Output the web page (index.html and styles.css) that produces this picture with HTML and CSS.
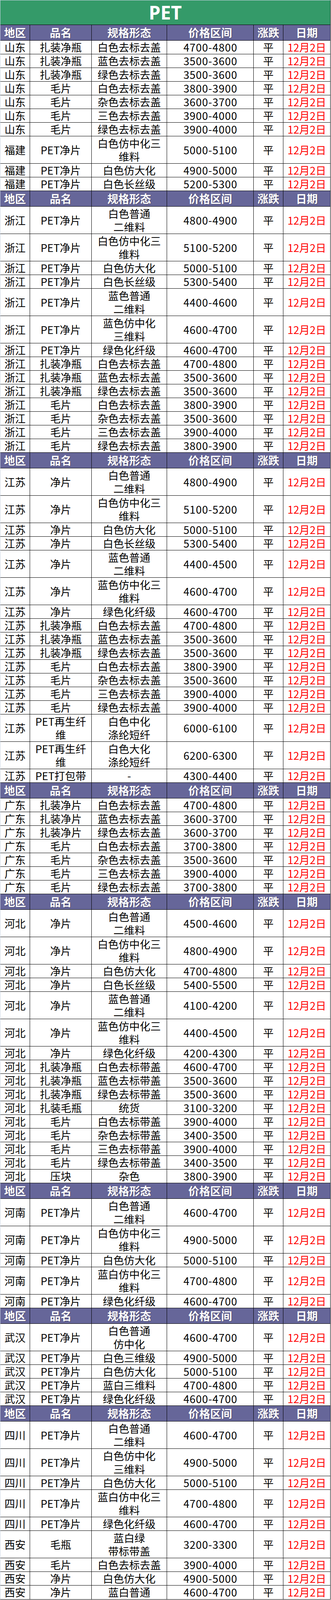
FILE: index.html
```html
<!DOCTYPE html>
<html lang="zh-CN">
<head>
<meta charset="utf-8">
<title>PET</title>
<link rel="stylesheet" href="styles.css">
</head>
<body>
<div class="sheet">
  <div class="title">PET</div>

  <div class="row head"><div class="c">地区</div><div class="c">品名</div><div class="c">规格形态</div><div class="c">价格区间</div><div class="c">涨跌</div><div class="c">日期</div></div>
  <div class="row"><div class="c">山东</div><div class="c">扎装净瓶</div><div class="c">白色去标去盖</div><div class="c num">4700-4800</div><div class="c">平</div><div class="c date">12月2日</div></div>
  <div class="row"><div class="c">山东</div><div class="c">扎装净瓶</div><div class="c">蓝色去标去盖</div><div class="c num">3500-3600</div><div class="c">平</div><div class="c date">12月2日</div></div>
  <div class="row"><div class="c">山东</div><div class="c">扎装净瓶</div><div class="c">绿色去标去盖</div><div class="c num">3500-3600</div><div class="c">平</div><div class="c date">12月2日</div></div>
  <div class="row"><div class="c">山东</div><div class="c">毛片</div><div class="c">白色去标去盖</div><div class="c num">3800-3900</div><div class="c">平</div><div class="c date">12月2日</div></div>
  <div class="row"><div class="c">山东</div><div class="c">毛片</div><div class="c">杂色去标去盖</div><div class="c num">3600-3700</div><div class="c">平</div><div class="c date">12月2日</div></div>
  <div class="row"><div class="c">山东</div><div class="c">毛片</div><div class="c">三色去标去盖</div><div class="c num">3900-4000</div><div class="c">平</div><div class="c date">12月2日</div></div>
  <div class="row"><div class="c">山东</div><div class="c">毛片</div><div class="c">绿色去标去盖</div><div class="c num">3900-4000</div><div class="c">平</div><div class="c date">12月2日</div></div>
  <div class="row tall"><div class="c">福建</div><div class="c">PET净片</div><div class="c two">白色仿中化三<br>维料</div><div class="c num">5000-5100</div><div class="c">平</div><div class="c date">12月2日</div></div>
  <div class="row"><div class="c">福建</div><div class="c">PET净片</div><div class="c">白色仿大化</div><div class="c num">4900-5000</div><div class="c">平</div><div class="c date">12月2日</div></div>
  <div class="row"><div class="c">福建</div><div class="c">PET净片</div><div class="c">白色长丝级</div><div class="c num">5200-5300</div><div class="c">平</div><div class="c date">12月2日</div></div>

  <div class="row head"><div class="c">地区</div><div class="c">品名</div><div class="c">规格形态</div><div class="c">价格区间</div><div class="c">涨跌</div><div class="c">日期</div></div>
  <div class="row tall"><div class="c">浙江</div><div class="c">PET净片</div><div class="c two">白色普通<br>二维料</div><div class="c num">4800-4900</div><div class="c">平</div><div class="c date">12月2日</div></div>
  <div class="row tall"><div class="c">浙江</div><div class="c">PET净片</div><div class="c two">白色仿中化三<br>维料</div><div class="c num">5100-5200</div><div class="c">平</div><div class="c date">12月2日</div></div>
  <div class="row"><div class="c">浙江</div><div class="c">PET净片</div><div class="c">白色仿大化</div><div class="c num">5000-5100</div><div class="c">平</div><div class="c date">12月2日</div></div>
  <div class="row"><div class="c">浙江</div><div class="c">PET净片</div><div class="c">白色长丝级</div><div class="c num">5300-5400</div><div class="c">平</div><div class="c date">12月2日</div></div>
  <div class="row tall"><div class="c">浙江</div><div class="c">PET净片</div><div class="c two">蓝色普通<br>二维料</div><div class="c num">4400-4600</div><div class="c">平</div><div class="c date">12月2日</div></div>
  <div class="row tall"><div class="c">浙江</div><div class="c">PET净片</div><div class="c two">蓝色仿中化<br>三维料</div><div class="c num">4600-4700</div><div class="c">平</div><div class="c date">12月2日</div></div>
  <div class="row"><div class="c">浙江</div><div class="c">PET净片</div><div class="c">绿色化纤级</div><div class="c num">4600-4700</div><div class="c">平</div><div class="c date">12月2日</div></div>
  <div class="row"><div class="c">浙江</div><div class="c">扎装净瓶</div><div class="c">白色去标去盖</div><div class="c num">4700-4800</div><div class="c">平</div><div class="c date">12月2日</div></div>
  <div class="row"><div class="c">浙江</div><div class="c">扎装净瓶</div><div class="c">蓝色去标去盖</div><div class="c num">3500-3600</div><div class="c">平</div><div class="c date">12月2日</div></div>
  <div class="row"><div class="c">浙江</div><div class="c">扎装净瓶</div><div class="c">绿色去标去盖</div><div class="c num">3500-3600</div><div class="c">平</div><div class="c date">12月2日</div></div>
  <div class="row"><div class="c">浙江</div><div class="c">毛片</div><div class="c">白色去标去盖</div><div class="c num">3800-3900</div><div class="c">平</div><div class="c date">12月2日</div></div>
  <div class="row"><div class="c">浙江</div><div class="c">毛片</div><div class="c">杂色去标去盖</div><div class="c num">3500-3600</div><div class="c">平</div><div class="c date">12月2日</div></div>
  <div class="row"><div class="c">浙江</div><div class="c">毛片</div><div class="c">三色去标去盖</div><div class="c num">3900-4000</div><div class="c">平</div><div class="c date">12月2日</div></div>
  <div class="row"><div class="c">浙江</div><div class="c">毛片</div><div class="c">绿色去标去盖</div><div class="c num">3800-3900</div><div class="c">平</div><div class="c date">12月2日</div></div>

  <div class="row head"><div class="c">地区</div><div class="c">品名</div><div class="c">规格形态</div><div class="c">价格区间</div><div class="c">涨跌</div><div class="c">日期</div></div>
  <div class="row tall"><div class="c">江苏</div><div class="c">净片</div><div class="c two">白色普通<br>二维料</div><div class="c num">4800-4900</div><div class="c">平</div><div class="c date">12月2日</div></div>
  <div class="row tall"><div class="c">江苏</div><div class="c">净片</div><div class="c two">白色仿中化三<br>维料</div><div class="c num">5100-5200</div><div class="c">平</div><div class="c date">12月2日</div></div>
  <div class="row"><div class="c">江苏</div><div class="c">净片</div><div class="c">白色仿大化</div><div class="c num">5000-5100</div><div class="c">平</div><div class="c date">12月2日</div></div>
  <div class="row"><div class="c">江苏</div><div class="c">净片</div><div class="c">白色长丝级</div><div class="c num">5300-5400</div><div class="c">平</div><div class="c date">12月2日</div></div>
  <div class="row tall"><div class="c">江苏</div><div class="c">净片</div><div class="c two">蓝色普通<br>二维料</div><div class="c num">4400-4500</div><div class="c">平</div><div class="c date">12月2日</div></div>
  <div class="row tall"><div class="c">江苏</div><div class="c">净片</div><div class="c two">蓝色仿中化三<br>维料</div><div class="c num">4600-4700</div><div class="c">平</div><div class="c date">12月2日</div></div>
  <div class="row"><div class="c">江苏</div><div class="c">净片</div><div class="c">绿色化纤级</div><div class="c num">4600-4700</div><div class="c">平</div><div class="c date">12月2日</div></div>
  <div class="row"><div class="c">江苏</div><div class="c">扎装净瓶</div><div class="c">白色去标去盖</div><div class="c num">4700-4800</div><div class="c">平</div><div class="c date">12月2日</div></div>
  <div class="row"><div class="c">江苏</div><div class="c">扎装净瓶</div><div class="c">蓝色去标去盖</div><div class="c num">3500-3600</div><div class="c">平</div><div class="c date">12月2日</div></div>
  <div class="row"><div class="c">江苏</div><div class="c">扎装净瓶</div><div class="c">绿色去标去盖</div><div class="c num">3500-3600</div><div class="c">平</div><div class="c date">12月2日</div></div>
  <div class="row"><div class="c">江苏</div><div class="c">毛片</div><div class="c">白色去标去盖</div><div class="c num">3800-3900</div><div class="c">平</div><div class="c date">12月2日</div></div>
  <div class="row"><div class="c">江苏</div><div class="c">毛片</div><div class="c">杂色去标去盖</div><div class="c num">3500-3600</div><div class="c">平</div><div class="c date">12月2日</div></div>
  <div class="row"><div class="c">江苏</div><div class="c">毛片</div><div class="c">三色去标去盖</div><div class="c num">3900-4000</div><div class="c">平</div><div class="c date">12月2日</div></div>
  <div class="row"><div class="c">江苏</div><div class="c">毛片</div><div class="c">绿色去标去盖</div><div class="c num">3900-4000</div><div class="c">平</div><div class="c date">12月2日</div></div>
  <div class="row tall"><div class="c">江苏</div><div class="c two">PET再生纤<br>维</div><div class="c two">白色中化<br>涤纶短纤</div><div class="c num">6000-6100</div><div class="c">平</div><div class="c date">12月2日</div></div>
  <div class="row tall"><div class="c">江苏</div><div class="c two">PET再生纤<br>维</div><div class="c two">白色大化<br>涤纶短纤</div><div class="c num">6200-6300</div><div class="c">平</div><div class="c date">12月2日</div></div>
  <div class="row"><div class="c">江苏</div><div class="c">PET打包带</div><div class="c">-</div><div class="c num">4300-4400</div><div class="c">平</div><div class="c date">12月2日</div></div>

  <div class="row head"><div class="c">地区</div><div class="c">品名</div><div class="c">规格形态</div><div class="c">价格区间</div><div class="c">涨跌</div><div class="c">日期</div></div>
  <div class="row"><div class="c">广东</div><div class="c">扎装净片</div><div class="c">白色去标去盖</div><div class="c num">4700-4800</div><div class="c">平</div><div class="c date">12月2日</div></div>
  <div class="row"><div class="c">广东</div><div class="c">扎装净片</div><div class="c">蓝色去标去盖</div><div class="c num">3600-3700</div><div class="c">平</div><div class="c date">12月2日</div></div>
  <div class="row"><div class="c">广东</div><div class="c">扎装净片</div><div class="c">绿色去标去盖</div><div class="c num">3600-3700</div><div class="c">平</div><div class="c date">12月2日</div></div>
  <div class="row"><div class="c">广东</div><div class="c">毛片</div><div class="c">白色去标去盖</div><div class="c num">3700-3800</div><div class="c">平</div><div class="c date">12月2日</div></div>
  <div class="row"><div class="c">广东</div><div class="c">毛片</div><div class="c">杂色去标去盖</div><div class="c num">3500-3600</div><div class="c">平</div><div class="c date">12月2日</div></div>
  <div class="row"><div class="c">广东</div><div class="c">毛片</div><div class="c">三色去标去盖</div><div class="c num">3900-4000</div><div class="c">平</div><div class="c date">12月2日</div></div>
  <div class="row"><div class="c">广东</div><div class="c">毛片</div><div class="c">绿色去标去盖</div><div class="c num">3700-3800</div><div class="c">平</div><div class="c date">12月2日</div></div>

  <div class="row head"><div class="c">地区</div><div class="c">品名</div><div class="c">规格形态</div><div class="c">价格区间</div><div class="c">涨跌</div><div class="c">日期</div></div>
  <div class="row tall"><div class="c">河北</div><div class="c">净片</div><div class="c two">白色普通<br>二维料</div><div class="c num">4500-4600</div><div class="c">平</div><div class="c date">12月2日</div></div>
  <div class="row tall"><div class="c">河北</div><div class="c">净片</div><div class="c two">白色仿中化三<br>维料</div><div class="c num">4800-4900</div><div class="c">平</div><div class="c date">12月2日</div></div>
  <div class="row"><div class="c">河北</div><div class="c">净片</div><div class="c">白色仿大化</div><div class="c num">4700-4800</div><div class="c">平</div><div class="c date">12月2日</div></div>
  <div class="row"><div class="c">河北</div><div class="c">净片</div><div class="c">白色长丝级</div><div class="c num">5400-5500</div><div class="c">平</div><div class="c date">12月2日</div></div>
  <div class="row tall"><div class="c">河北</div><div class="c">净片</div><div class="c two">蓝色普通<br>二维料</div><div class="c num">4100-4200</div><div class="c">平</div><div class="c date">12月2日</div></div>
  <div class="row tall"><div class="c">河北</div><div class="c">净片</div><div class="c two">蓝色仿中化三<br>维料</div><div class="c num">4400-4500</div><div class="c">平</div><div class="c date">12月2日</div></div>
  <div class="row"><div class="c">河北</div><div class="c">净片</div><div class="c">绿色化纤级</div><div class="c num">4200-4300</div><div class="c">平</div><div class="c date">12月2日</div></div>
  <div class="row"><div class="c">河北</div><div class="c">扎装净瓶</div><div class="c">白色去标带盖</div><div class="c num">4600-4700</div><div class="c">平</div><div class="c date">12月2日</div></div>
  <div class="row"><div class="c">河北</div><div class="c">扎装净瓶</div><div class="c">蓝色去标带盖</div><div class="c num">3500-3600</div><div class="c">平</div><div class="c date">12月2日</div></div>
  <div class="row"><div class="c">河北</div><div class="c">扎装净瓶</div><div class="c">绿色去标带盖</div><div class="c num">3500-3600</div><div class="c">平</div><div class="c date">12月2日</div></div>
  <div class="row"><div class="c">河北</div><div class="c">扎装毛瓶</div><div class="c">统货</div><div class="c num">3100-3200</div><div class="c">平</div><div class="c date">12月2日</div></div>
  <div class="row"><div class="c">河北</div><div class="c">毛片</div><div class="c">白色去标带盖</div><div class="c num">3900-4000</div><div class="c">平</div><div class="c date">12月2日</div></div>
  <div class="row"><div class="c">河北</div><div class="c">毛片</div><div class="c">杂色去标带盖</div><div class="c num">3400-3500</div><div class="c">平</div><div class="c date">12月2日</div></div>
  <div class="row"><div class="c">河北</div><div class="c">毛片</div><div class="c">三色去标带盖</div><div class="c num">3900-4000</div><div class="c">平</div><div class="c date">12月2日</div></div>
  <div class="row"><div class="c">河北</div><div class="c">毛片</div><div class="c">绿色去标带盖</div><div class="c num">3400-3500</div><div class="c">平</div><div class="c date">12月2日</div></div>
  <div class="row"><div class="c">河北</div><div class="c">压块</div><div class="c">杂色</div><div class="c num">3800-3900</div><div class="c">平</div><div class="c date">12月2日</div></div>

  <div class="row head"><div class="c">地区</div><div class="c">品名</div><div class="c">规格形态</div><div class="c">价格区间</div><div class="c">涨跌</div><div class="c">日期</div></div>
  <div class="row tall"><div class="c">河南</div><div class="c">PET净片</div><div class="c two">白色普通<br>二维料</div><div class="c num">4600-4700</div><div class="c">平</div><div class="c date">12月2日</div></div>
  <div class="row tall"><div class="c">河南</div><div class="c">PET净片</div><div class="c two">白色仿中化三<br>维料</div><div class="c num">4900-5000</div><div class="c">平</div><div class="c date">12月2日</div></div>
  <div class="row"><div class="c">河南</div><div class="c">PET净片</div><div class="c">白色仿大化</div><div class="c num">5000-5100</div><div class="c">平</div><div class="c date">12月2日</div></div>
  <div class="row tall"><div class="c">河南</div><div class="c">PET净片</div><div class="c two">蓝白仿中化三<br>维料</div><div class="c num">4700-4800</div><div class="c">平</div><div class="c date">12月2日</div></div>
  <div class="row"><div class="c">河南</div><div class="c">PET净片</div><div class="c">绿色化纤级</div><div class="c num">4600-4700</div><div class="c">平</div><div class="c date">12月2日</div></div>

  <div class="row head"><div class="c">地区</div><div class="c">品名</div><div class="c">规格形态</div><div class="c">价格区间</div><div class="c">涨跌</div><div class="c">日期</div></div>
  <div class="row tall"><div class="c">武汉</div><div class="c">PET净片</div><div class="c two">白色普通<br>仿中化</div><div class="c num">4600-4700</div><div class="c">平</div><div class="c date">12月2日</div></div>
  <div class="row"><div class="c">武汉</div><div class="c">PET净片</div><div class="c">白色三维级</div><div class="c num">4900-5000</div><div class="c">平</div><div class="c date">12月2日</div></div>
  <div class="row"><div class="c">武汉</div><div class="c">PET净片</div><div class="c">白色仿大化</div><div class="c num">5000-5100</div><div class="c">平</div><div class="c date">12月2日</div></div>
  <div class="row"><div class="c">武汉</div><div class="c">PET净片</div><div class="c">蓝白三维料</div><div class="c num">4700-4800</div><div class="c">平</div><div class="c date">12月2日</div></div>
  <div class="row"><div class="c">武汉</div><div class="c">PET净片</div><div class="c">绿色化纤级</div><div class="c num">4600-4700</div><div class="c">平</div><div class="c date">12月2日</div></div>

  <div class="row head"><div class="c">地区</div><div class="c">品名</div><div class="c">规格形态</div><div class="c">价格区间</div><div class="c">涨跌</div><div class="c">日期</div></div>
  <div class="row tall"><div class="c">四川</div><div class="c">PET净片</div><div class="c two">白色普通<br>二维料</div><div class="c num">4600-4700</div><div class="c">平</div><div class="c date">12月2日</div></div>
  <div class="row tall"><div class="c">四川</div><div class="c">PET净片</div><div class="c two">白色仿中化<br>三维料</div><div class="c num">4900-5000</div><div class="c">平</div><div class="c date">12月2日</div></div>
  <div class="row"><div class="c">四川</div><div class="c">PET净片</div><div class="c">白色仿大化</div><div class="c num">5000-5100</div><div class="c">平</div><div class="c date">12月2日</div></div>
  <div class="row tall"><div class="c">四川</div><div class="c">PET净片</div><div class="c two">蓝白仿中化三<br>维料</div><div class="c num">4700-4800</div><div class="c">平</div><div class="c date">12月2日</div></div>
  <div class="row"><div class="c">四川</div><div class="c">PET净片</div><div class="c">绿色化纤级</div><div class="c num">4600-4700</div><div class="c">平</div><div class="c date">12月2日</div></div>
  <div class="row tall"><div class="c">西安</div><div class="c">毛瓶</div><div class="c two">蓝白绿<br>带标带盖</div><div class="c num">3200-3300</div><div class="c">平</div><div class="c date">12月2日</div></div>
  <div class="row"><div class="c">西安</div><div class="c">毛片</div><div class="c">白色去标去盖</div><div class="c num">3900-4000</div><div class="c">平</div><div class="c date">12月2日</div></div>
  <div class="row"><div class="c">西安</div><div class="c">净片</div><div class="c">白色仿大化</div><div class="c num">4900-5000</div><div class="c">平</div><div class="c date">12月2日</div></div>
  <div class="row"><div class="c">西安</div><div class="c">净片</div><div class="c">蓝白普通</div><div class="c num">4600-4700</div><div class="c">平</div><div class="c date">12月2日</div></div>
</div>
</body>
</html>
```

FILE: styles.css
```css
html, body {
  margin: 0;
  padding: 0;
  background: #ffffff;
}

body {
  width: 848px;
  font-family: "Noto Sans CJK SC", "Noto Sans", sans-serif;
  color: #000000;
}

.sheet {
  width: 846px;
  border-left: 1px solid #c9d3e3;
  border-bottom: 1px solid #000000;
}

.title {
  box-sizing: border-box;
  height: 64px;
  border-top: 1px solid #c9d3e3;
  border-bottom: 1px solid #000000;
  border-right: 1px solid #000000;
  background: #349a69;
  color: #ffffff;
  font-family: "Noto Sans", "Noto Sans CJK SC", sans-serif;
  font-weight: 700;
  font-size: 48px;
  line-height: 62px;
  text-align: center;
}

.row {
  display: grid;
  grid-template-columns: 76px 158px 193px 222px 76px 121px;
  grid-template-rows: 35px;
  height: 35px;
}

.row.tall {
  grid-template-rows: 70px;
  height: 70px;
}

.row.head {
  grid-template-rows: 40px;
  height: 40px;
  background: #666699;
  color: #ffffff;
}

.c {
  box-sizing: border-box;
  min-width: 0;
  min-height: 0;
  text-align: center;
  border-right: 1px solid #000000;
  border-bottom: 1px solid #000000;
  font-size: 27px;
  line-height: 34px;
  white-space: nowrap;
}

.tall .c {
  line-height: 69px;
}

.tall .c.two {
  line-height: 34px;
  padding-top: 1px;
}

.head .c {
  font-size: 28px;
  font-weight: 700;
  line-height: 39px;
  text-shadow: 1px 1px 1px rgba(40, 40, 60, 0.55);
}

.row:last-child .c {
  border-bottom: none;
}

.num {
  letter-spacing: 1px;
  text-indent: 1px;
}

.date {
  color: #ff0000;
}
```
